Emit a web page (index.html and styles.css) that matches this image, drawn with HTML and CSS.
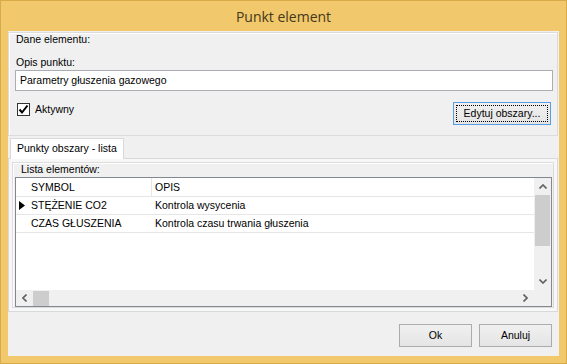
FILE: index.html
```html
<!DOCTYPE html>
<html lang="pl">
<head>
	<meta charset="UTF-8">
	<title>Punkt element</title>
	<link rel="stylesheet" href="styles.css">
</head>
<body>
	<div class="window">
		<div class="titlebar">Punkt element</div>
		<div class="client">
			<div class="group dane">
				<div class="group-title">Dane elementu:</div>
				<div class="field-label">Opis punktu:</div>
				<div class="textbox">Parametry głuszenia gazowego</div>
				<div class="row">
					<label class="check">
						<span class="box">
							<svg width="11" height="11" viewBox="0 0 11 11"><path d="M1.5 5.5 L4 8.5 L9.5 1.5" fill="none" stroke="#000" stroke-width="2"/></svg>
						</span>
						Aktywny
					</label>
					<button class="btn edit"><span class="focus">Edytuj obszary...</span></button>
				</div>
			</div>
			<div class="tabs">
				<div class="tab-strip">
					<div class="tab">Punkty obszary - lista</div>
				</div>
				<div class="tab-page">
					<div class="group lista">
						<div class="group-title">Lista elementów:</div>
						<div class="grid">
							<div class="grid-body">
								<div class="grid-rows">
									<div class="grid-row head">
										<span class="rh"></span>
										<span class="cell c1">SYMBOL</span>
										<span class="cell c2">OPIS</span>
									</div>
									<div class="grid-row">
										<span class="rh">
											<svg width="6" height="9" viewBox="0 0 6 9"><path d="M0 0 L6 4.5 L0 9 Z" fill="#000"/></svg>
										</span>
										<span class="cell c1">STĘŻENIE CO2</span>
										<span class="cell c2">Kontrola wysycenia</span>
									</div>
									<div class="grid-row">
										<span class="rh"></span>
										<span class="cell c1">CZAS GŁUSZENIA</span>
										<span class="cell c2">Kontrola czasu trwania głuszenia</span>
									</div>
								</div>
								<div class="vscroll">
									<span class="arrow">
										<svg width="8" height="5" viewBox="0 0 8 5"><path d="M0.5 4.5 L4 1 L7.5 4.5" fill="none" stroke="#606060" stroke-width="1.6"/></svg>
									</span>
									<span class="vthumb"></span>
									<span class="vtrack"></span>
									<span class="arrow">
										<svg width="8" height="5" viewBox="0 0 8 5"><path d="M0.5 0.5 L4 4 L7.5 0.5" fill="none" stroke="#606060" stroke-width="1.6"/></svg>
									</span>
								</div>
							</div>
							<div class="hscroll-row">
								<div class="hscroll">
									<span class="arrow">
										<svg width="5" height="8" viewBox="0 0 5 8"><path d="M4.5 0.5 L1 4 L4.5 7.5" fill="none" stroke="#606060" stroke-width="1.6"/></svg>
									</span>
									<span class="hthumb"></span>
									<span class="htrack"></span>
									<span class="arrow">
										<svg width="5" height="8" viewBox="0 0 5 8"><path d="M0.5 0.5 L4 4 L0.5 7.5" fill="none" stroke="#606060" stroke-width="1.6"/></svg>
									</span>
								</div>
								<div class="corner"></div>
							</div>
						</div>
					</div>
				</div>
			</div>
			<div class="footer">
				<button class="btn">Ok</button>
				<button class="btn">Anuluj</button>
			</div>
		</div>
	</div>
</body>
</html>
```

FILE: styles.css
```css
html, body {
	margin: 0;
	padding: 0;
}
body {
	font-family: "Liberation Sans", Arial, sans-serif;
	font-size: 10.5px;
	line-height: 13px;
	color: #000;
	background: #f1c86c;
}
.window {
	width: 567px;
	height: 364px;
	box-sizing: border-box;
	display: flex;
	flex-direction: column;
	background: #f1c86c;
	border: 1px solid #d8ab48;
	padding: 0 7px 7px;
}
.titlebar {
	height: 30px;
	display: flex;
	align-items: center;
	justify-content: center;
	font-family: "Open Sans", "Noto Sans", sans-serif;
	font-size: 14px;
	color: #46381a;
}
.client {
	flex: 1;
	display: flex;
	flex-direction: column;
	background: #f0f0f0;
}
.group {
	box-sizing: border-box;
	border: 1px solid #dcdcdc;
	box-shadow: inset 1px 1px 0 #fff;
}
.group-title {
	height: 13px;
	white-space: nowrap;
}
.dane {
	height: 104px;
	margin: 1px 1px 0 0;
	padding: 0 0 0 6px;
}
.dane .group-title {
	margin-left: 1px;
}
.field-label {
	margin: 10px 0 0 1px;
}
.textbox {
	box-sizing: border-box;
	width: 538px;
	height: 21px;
	margin-top: 1px;
	padding: 3px 4px;
	background: #fff;
	border: 1px solid #abadb3;
}
.row {
	display: flex;
	justify-content: space-between;
	align-items: flex-start;
	margin-top: 11px;
	width: 536px;
}
.check {
	display: flex;
	align-items: center;
	gap: 5px;
	margin: 1px 0 0 2px;
}
.box {
	box-sizing: border-box;
	width: 13px;
	height: 13px;
	border: 1px solid #333;
	background: #fff;
	display: flex;
	align-items: center;
	justify-content: center;
}
.btn {
	box-sizing: border-box;
	height: 23px;
	width: 73px;
	margin: 0;
	padding: 0;
	font: inherit;
	color: #000;
	border: 1px solid #acacac;
	background: linear-gradient(#f0f0f0, #e5e5e5);
}
.btn.edit {
	width: 98px;
	border-color: #569de5;
	padding: 2px;
}
.focus {
	display: block;
	height: 100%;
	box-sizing: border-box;
	border: 1px dotted #000;
	line-height: 15px;
}
.tabs {
	margin-top: 2px;
	display: flex;
	flex-direction: column;
}
.tab-strip {
	display: flex;
	height: 20px;
	padding-left: 2px;
}
.tab {
	box-sizing: border-box;
	height: 21px;
	padding: 3px 6px 0;
	width: 114px;
	white-space: nowrap;
	background: #fff;
	border: 1px solid #d9d9d9;
	border-bottom: none;
	position: relative;
	z-index: 1;
}
.tab-page {
	box-sizing: border-box;
	height: 154px;
	width: 550px;
	border: 1px solid #d9d9d9;
	background: #f7f7f7;
	padding: 3px;
}
.lista {
	height: 146px;
	padding: 0 1px 1px 2px;
	background: #f0f0f0;
}
.lista .group-title {
	margin-left: 6px;
}
.grid {
	box-sizing: border-box;
	width: 537px;
	height: 130px;
	margin-top: 1px;
	border: 1px solid #828790;
	background: #fff;
	display: flex;
	flex-direction: column;
}
.grid-body {
	flex: 1;
	display: flex;
}
.grid-rows {
	flex: 1;
}
.grid-row {
	display: flex;
	height: 18px;
	box-sizing: border-box;
	border-bottom: 1px solid #e6e6e6;
	align-items: center;
}
.grid-row.head {
	height: 19px;
}
.rh {
	width: 12px;
	height: 100%;
	display: flex;
	align-items: center;
	justify-content: center;
	flex: none;
}
.cell {
	height: 100%;
	display: flex;
	align-items: center;
	box-sizing: border-box;
	padding-left: 3px;
	white-space: nowrap;
}
.c1 {
	width: 124px;
}
.head .c1 {
	border-right: 1px solid #e6e6e6;
}
.c2 {
	flex: 1;
}
.vscroll {
	width: 17px;
	display: flex;
	flex-direction: column;
	align-items: center;
	background: #f0f0f0;
}
.vscroll .arrow {
	height: 17px;
	display: flex;
	align-items: center;
	justify-content: center;
}
.vthumb {
	width: 15px;
	height: 51px;
	background: #cdcdcd;
}
.vtrack {
	flex: 1;
}
.hscroll-row {
	display: flex;
	height: 16px;
}
.hscroll {
	flex: 1;
	display: flex;
	align-items: center;
	background: #f0f0f0;
}
.hscroll .arrow {
	width: 17px;
	height: 100%;
	display: flex;
	align-items: center;
	justify-content: center;
}
.hthumb {
	width: 16px;
	height: 15px;
	background: #cdcdcd;
}
.htrack {
	flex: 1;
}
.corner {
	width: 17px;
	background: #f0f0f0;
}
.footer {
	display: flex;
	justify-content: flex-end;
	gap: 7px;
	padding: 12px 7px 0 0;
}
```
